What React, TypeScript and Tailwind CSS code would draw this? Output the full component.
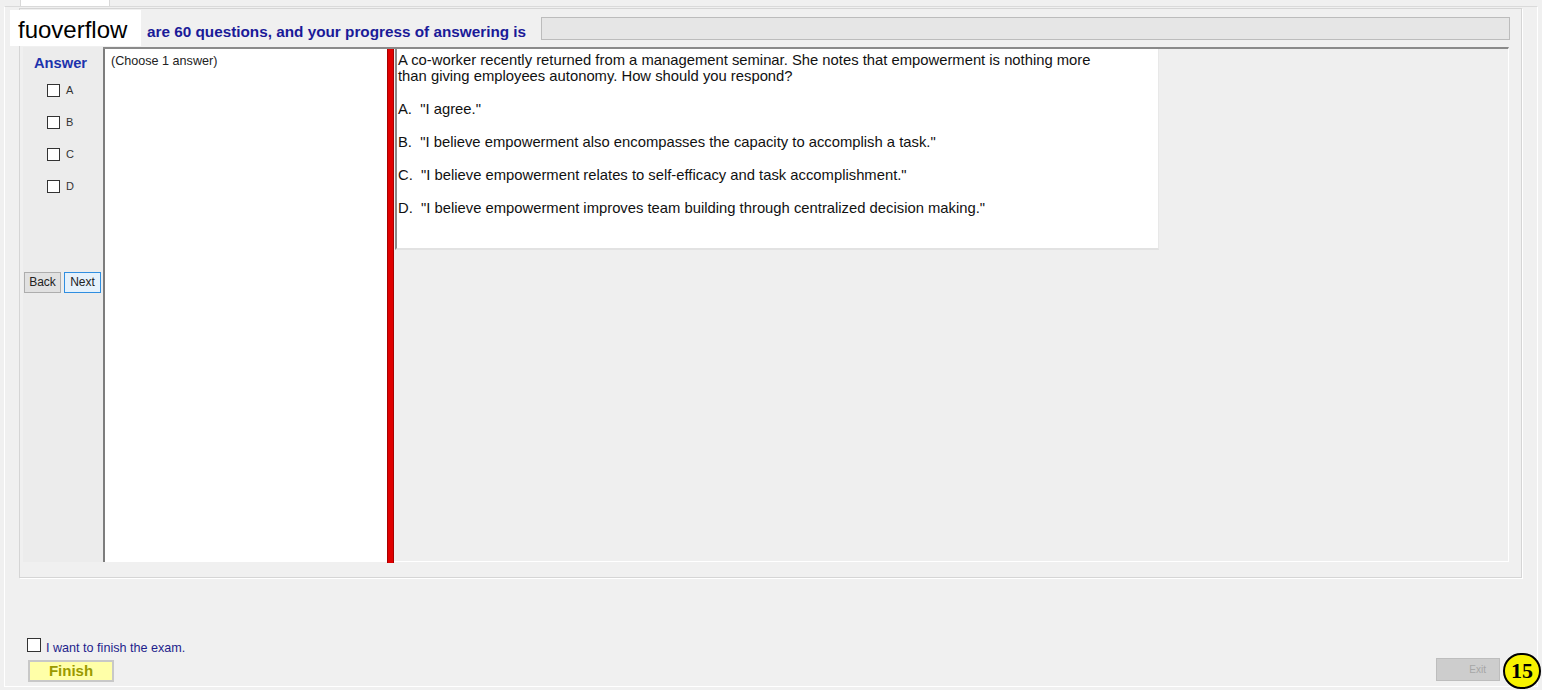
import React from 'react';

const options = [
  'A.  "I agree."',
  'B.  "I believe empowerment also encompasses the capacity to accomplish a task."',
  'C.  "I believe empowerment relates to self-efficacy and task accomplishment."',
  'D.  "I believe empowerment improves team building through centralized decision making."',
];

const Box: React.FC<{ className?: string }> = ({ className = '' }) => (
  <span className={`block w-[13px] h-[13px] bg-white border border-[#333] ${className}`} />
);

const App: React.FC = () => {
  return (
    <div className="relative w-[1542px] h-[690px] overflow-hidden bg-[#f0f0f0] font-['Liberation_Sans',Arial,sans-serif]">
      {/* tab strip */}
      <div className="flex h-[6px]">
        <div className="ml-[20px] w-[90px] h-[6px] bg-white border-x border-[#d9d9d9]" />
      </div>

      {/* tab page */}
      <div className="ml-[4px] w-[1534px] h-[681px] border border-t-[#dadada] border-x-white border-b-white flex flex-col">
        {/* group box */}
        <div className="ml-[14px] mt-[1px] w-[1503px] h-[570px] border border-[#d5d5d5] shadow-[1px_1px_0_#ffffff] flex flex-col">
          {/* header row */}
          <div className="flex h-[38px]">
            <span className="ml-[127px] mt-[14px] text-[15.3px] leading-[18px] font-bold text-[#1a1a98] whitespace-nowrap">
              are 60 questions, and your progress of answering is
            </span>
            <div className="ml-auto mr-[11px] mt-[8px] w-[969px] h-[23px] bg-[#e6e6e6] border border-[#bcbcbc]" />
          </div>

          {/* inner panel */}
          <div className="ml-[3px] w-[1486px] h-[515px] flex">
            {/* answer column */}
            <div className="w-[80px] bg-[#ececec] flex flex-col">
              <div className="mt-[7px] ml-[11px] text-[14.7px] leading-[18px] font-bold text-[#1d33ad]">Answer</div>
              <div className="mt-[12px] flex flex-col gap-[19px] ml-[24px]">
                {['A', 'B', 'C', 'D'].map((l) => (
                  <div key={l} className="flex items-center gap-[6px] h-[13px]">
                    <Box />
                    <span className="text-[11px] leading-[13px] text-[#333]">{l}</span>
                  </div>
                ))}
              </div>
              <div className="mt-[79px] ml-[1px] flex gap-[3px]">
                <button className="w-[37px] h-[21px] bg-[#e1e1e1] border border-[#adadad] text-[12px] leading-[19px] text-[#222]">
                  Back
                </button>
                <button className="w-[37px] h-[21px] bg-[#e5f1fb] border border-[#2f8ee0] text-[12px] leading-[19px] text-[#222]">
                  Next
                </button>
              </div>
            </div>

            {/* main area */}
            <div className="flex-1 flex border-t-2 border-t-[#8a8a8a] border-r border-r-white border-b border-b-white">
              <div className="w-[284px] h-[513px] bg-white border-l-2 border-l-[#7d7d7d]">
                <div className="pl-[6px] pt-[5px] text-[12.6px] leading-[15px] text-[#222]">(Choose 1 answer)</div>
              </div>
              <div className="w-[7px] h-[514px] bg-[#e00000] border-x border-[#a80000]" />
              <div className="flex-1 bg-[#efefef]">
                <div className="ml-[1px] w-[764px] h-[201px] bg-white border-l-2 border-l-[#8a8a8a] border-b-2 border-b-[#e2e2e2] border-r border-r-[#e8e8e8] pl-[1px] pt-[3px] text-[14.8px] leading-[16px] text-[#111]">
                  <p>A co-worker recently returned from a management seminar. She notes that empowerment is nothing more</p>
                  <p>than giving employees autonomy. How should you respond?</p>
                  {options.map((o) => (
                    <p key={o} className="mt-[17px] whitespace-pre">{o}</p>
                  ))}
                </div>
              </div>
            </div>
          </div>
        </div>

        {/* bottom */}
        <div className="flex-1 flex items-end pb-[4px]">
          <div className="ml-[22px] flex flex-col">
            <div className="flex items-start gap-[5px]">
              <Box className="w-[14px] h-[14px]" />
              <span className="mt-[3px] text-[12.6px] leading-[14px] text-[#1e1e8c]">I want to finish the exam.</span>
            </div>
            <button className="mt-[5px] ml-[1px] w-[86px] h-[22px] bg-[#ffffa8] border-2 border-[#c8c8c8] text-[15px] leading-[18px] font-bold text-[#9a9a00]">
              Finish
            </button>
          </div>
          <button className="ml-auto mr-[37px] mb-[1px] w-[64px] h-[23px] bg-[#cdcdcd] border border-[#bdbdbd] text-[10px] text-[#a6a6a6] text-right pr-[13px]">
            Exit
          </button>
        </div>
      </div>

      {/* watermark label */}
      <div className="absolute left-[10px] top-[10px] w-[131px] h-[36px] bg-white pl-[8px] pt-[6px] text-[24px] leading-[28px] text-black">
        fuoverflow
      </div>

      {/* badge */}
      <div className="absolute left-[1503px] top-[653px] w-[38px] h-[36px] rounded-full bg-[#f7f200] border-2 border-black flex items-center justify-center font-['Liberation_Serif',serif] font-bold text-[22px] leading-none text-black">
        15
      </div>
    </div>
  );
};

export default App;
